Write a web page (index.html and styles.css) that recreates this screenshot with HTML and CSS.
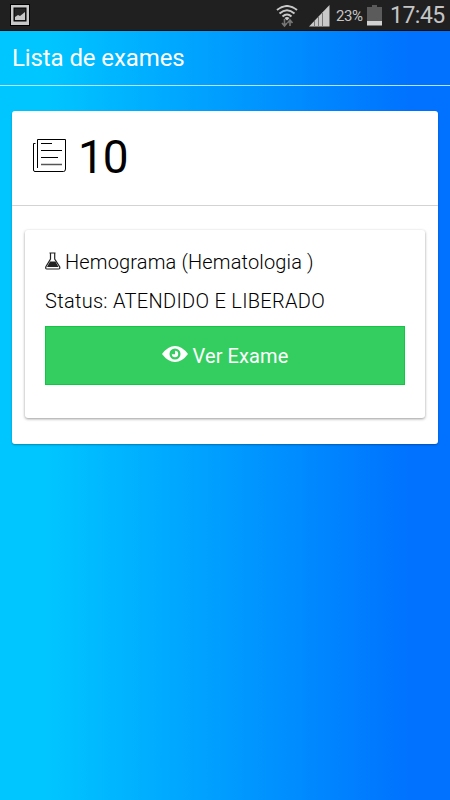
FILE: index.html
```html
<!DOCTYPE html>
<html lang="pt-BR">
<head>
<meta charset="utf-8">
<title>Lista de exames</title>
<link rel="stylesheet" href="styles.css">
</head>
<body>
<div class="statusbar">
  <svg class="shot" width="20" height="22" viewBox="0 0 20 22"><rect x=".5" y=".5" width="19" height="21" fill="#c8c8c8" stroke="#000"/><rect x="4" y="4" width="12" height="13" fill="#252525" stroke="#000"/><path d="M5 16v-3l3-2 2 1 5-4v8z" fill="#c8c8c8"/></svg>
  <div class="indicators">
    <svg class="wifi" width="22" height="23" viewBox="0 0 22 23"><g fill="none" stroke="#c8c8c8" stroke-width="2"><path d="M1 5Q11-3 21 5M3.500 8.500Q11 2 18.500 8.500M6.500 11.500Q11 7.500 15.500 11.500"/></g><path d="M8.500 13Q11 11 13.500 13L11 15.500z" fill="#c8c8c8"/><path d="M8.500 14v7M6 18l2.500 3 2.500-3M14 21v-6M11.500 18l2.500-3 2.500 3" fill="none" stroke="#777" stroke-width="1.600"/></svg>
    <svg class="signal" width="21" height="22" viewBox="0 0 21 22"><path d="M0 21.500L20.500 0v21.500z" fill="#c8c8c8"/><path d="M5.500 16v6M9.500 12v10M13.500 8v14" stroke="#777" stroke-width="1"/></svg>
    <span class="percent">23%</span>
    <svg class="battery" width="15" height="21" viewBox="0 0 15 21"><path d="M5 0h5v2h5v14H0V2h5z" fill="#5b5b5b"/><path d="M0 16h15v4.500H0z" fill="#d2d2d2"/></svg>
    <span class="clock">17:45</span>
  </div>
</div>
<header class="header"><h1 class="title">Lista de exames</h1></header>
<main class="content">
  <section class="card">
    <div class="summary">
      <svg class="news" width="35" height="35" viewBox="0 0 35 35" fill="none" stroke="#000"><path d="M5.500 30V1.500h28V31q0 2.500-2 2.500H3Q1.500 33.500 1.500 32V5.500h2"/><path d="M9 5.500h11M9 12.500h21M9 19.500h17"/><path d="M9 26.500h21" stroke="#555" stroke-width="1.500"/></svg>
      <span class="count">10</span>
    </div>
    <div class="list">
      <article class="exam">
        <div class="name"><svg class="flask" width="16" height="18" viewBox="0 0 16 18"><path d="M4.500 1h6M5.500 1v6L1 14.500Q0 17 2 17h11.500q2 0 1-2.500L9.700 7V1" fill="none" stroke="#222" stroke-width="1.200"/><path d="M5 9.500h5.500l3 5.500H2z" fill="#222"/></svg><span class="label">Hemograma (Hematologia )</span></div>
        <div class="status">Status: ATENDIDO E LIBERADO</div>
        <button class="view"><svg class="eye" width="26" height="16" viewBox="0 0 26 16"><path d="M0 8Q6 0 13 0t13 8q-6 8-13 8T0 8z" fill="#fff"/><circle cx="13" cy="8" r="5.500" fill="#34ce60"/><circle cx="13" cy="8" r="3.200" fill="#fff"/><path d="M13 4v4.300h-3.500A3.500 3.500 0 0 1 13 4z" fill="#34ce60"/></svg><span class="action">Ver Exame</span></button>
      </article>
    </div>
  </section>
</main>
</body>
</html>
```

FILE: styles.css
```css
* { box-sizing: border-box; }
body { margin: 0; height: 800px; overflow: hidden; font-family: Roboto, sans-serif; background: linear-gradient(to right, #00c6ff 10%, #0072ff 91%); }
.statusbar { height: 31px; padding: 0 6px 0 10px; background: #202020; border-bottom: 1px solid #180d0d; display: flex; justify-content: space-between; align-items: flex-start; color: #c5c5c5; }
.shot { margin-top: 4px; }
.indicators { display: flex; }
.wifi { margin-top: 5px; }
.signal { margin: 5px 6px 0 11px; }
.percent { width: 27px; font-size: 15px; line-height: 32px; letter-spacing: -.4px; }
.battery { margin: 5px 8px 0 4px; }
.clock { width: 54px; font-size: 23px; line-height: 31px; letter-spacing: -.5px; white-space: nowrap; }
.header { height: 55px; padding-left: 12px; border-bottom: 1px solid #b5e5ff; }
.title { margin: 0; color: #fff; font-size: 24px; font-weight: 400; line-height: 55px; letter-spacing: -.1px; }
.content { padding: 25px 12px; }
.card { height: 333px; background: #fff; border-radius: 3px; box-shadow: 0 1px 2px rgba(0,0,0,.3); }
.summary { height: 95px; padding-left: 20px; border-bottom: 1px solid #d3d3d3; display: flex; }
.news { margin-top: 27px; }
.count { margin-left: 11px; font-size: 46px; line-height: 92px; letter-spacing: -1.2px; color: #000; }
.list { padding: 24px 13px 0; }
.exam { height: 188px; padding: 19px 20px; background: #fff; border-radius: 3px; box-shadow: 0 1px 3px rgba(0,0,0,.4); color: #000; font-size: 20px; font-weight: 300; }
.name { height: 26px; display: flex; line-height: 26px; }
.flask { margin: 3px 4px 0 0; }
.label, .status { white-space: pre; letter-spacing: .15px; }
.status { margin-top: 13px; height: 26px; line-height: 26px; letter-spacing: .3px; }
.view { width: 100%; height: 59px; margin-top: 12px; padding: 0; border: 1px solid #10c744; background: #34ce60; color: #fff; font: 20px Roboto, sans-serif; display: flex; justify-content: center; align-items: center; gap: 5px; }
.eye { margin-bottom: 4px; }
.action { letter-spacing: .1px; }
```
